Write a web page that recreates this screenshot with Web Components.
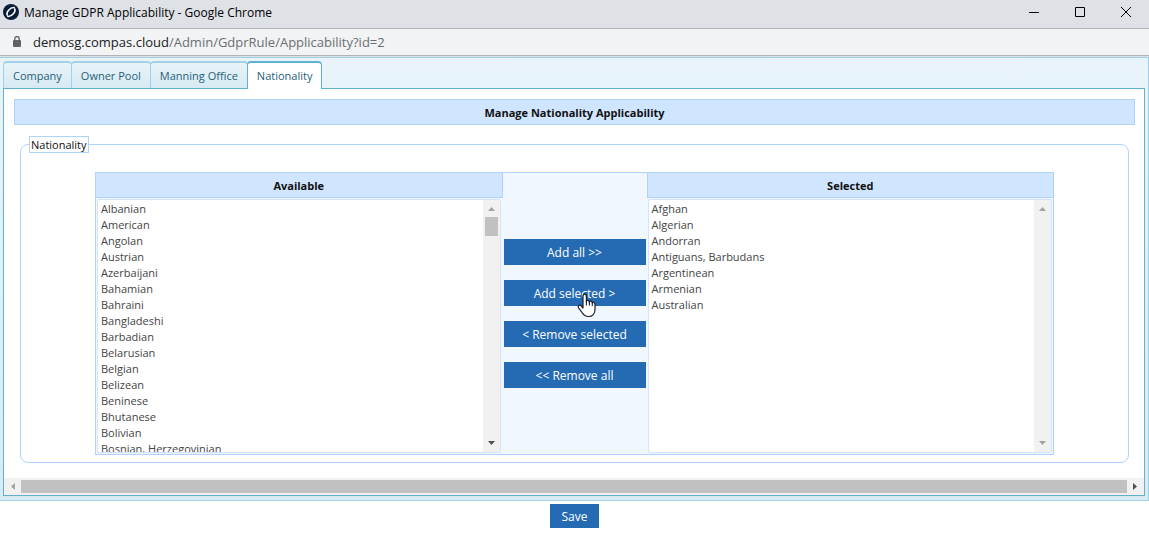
<!DOCTYPE html>
<html lang="en">
<head>
<meta charset="utf-8">
<title>Manage GDPR Applicability</title>
<style>
body {
  margin: 0;
  background-color: white;
  font-family: "Open Sans", "Noto Sans", sans-serif;
  font-size: 11px;
  line-height: 16px;
  color: #111;
}
</style>
</head>
<body>
<window-bar></window-bar>
<tab-panel>
  <section-title>Manage Nationality Applicability</section-title>
  <field-group legend="Nationality">
    <dual-list></dual-list>
  </field-group>
</tab-panel>
<form-footer>
  <action-button>Save</action-button>
</form-footer>

<script>
/**
 * Builds a template element from a string.
 */
function html (markup) {
  const template = document.createElement('template')
  template.innerHTML = markup
  return template
}

const windowTemplate = html(`
<style>
:host {
  display: block;
}

.title-bar {
  display: flex;
  align-items: center;
  height: 28px;
  padding-left: 3px;
  background-color: #dee1e6;
  border-bottom: 1px solid #b1b3b6;
  color: #000;
}

.logo {
  width: 16px;
  height: 16px;
  margin: 0 5px 4px 0;
}

h1 {
  flex: 1;
  margin: 0 0 2px;
  font-size: 12px;
  font-weight: normal;
}

.title-bar button {
  display: flex;
  align-items: center;
  justify-content: center;
  width: 46px;
  height: 24px;
  margin-bottom: 4px;
  padding: 0;
  border: 0;
  background: none;
}

.address-bar {
  display: flex;
  align-items: center;
  gap: 11px;
  height: 26px;
  padding-left: 12px;
  background-color: #f1f3f4;
  border-bottom: 1px solid #b1b3b6;
  box-shadow: 0 1px #dee1e3;
  margin-bottom: 1px;
  font-size: 13px;
  color: #6b6f73;
}

.address-bar b {
  font-weight: normal;
  color: #202124;
}
</style>
<div class="title-bar">
  <svg class="logo" viewBox="0 0 16 16" aria-hidden="true">
    <circle cx="8" cy="8" r="8" fill="#0b1c36"/>
    <g fill="none" stroke="#fff" stroke-width="1.500" stroke-linecap="round">
      <path d="M4.300 11.200C2.800 8.500 7 3.200 11.200 3.600"/>
      <path d="M11.700 4.800C13.200 7.500 9 12.800 4.800 12.400"/>
    </g>
  </svg>
  <h1>Manage GDPR Applicability - Google Chrome</h1>
  <button aria-label="Minimize"><svg width="10" height="10"><path d="M0 5.5H10" stroke="#000"/></svg></button>
  <button aria-label="Maximize"><svg width="10" height="10"><path d="M.5 .5H9.5V9.5H.5Z" fill="none" stroke="#000"/></svg></button>
  <button aria-label="Close"><svg width="10" height="10"><path d="M0 0L10 10M10 0L0 10" stroke="#000"/></svg></button>
</div>
<div class="address-bar">
  <svg width="10" height="12" viewBox="0 0 10 12" aria-hidden="true">
    <rect x="1" y="4" width="8" height="7" rx="1" fill="#5f6368"/>
    <path d="M2.8 4.5V2.8a2.2 2.2 0 0 1 4.4 0V4.5" fill="none" stroke="#5f6368" stroke-width="1.3"/>
  </svg>
  <span><b>demosg.compas.cloud</b>/Admin/GdprRule/Applicability?id=2</span>
</div>
`)
customElements.define('window-bar',
  /**
   * Title bar and address bar of the popup window.
   */
  class extends HTMLElement {
    constructor () {
      super()

      this.attachShadow({ mode: 'open' })
        .appendChild(windowTemplate.content.cloneNode(true))
    }
  })

const scrollTemplate = html(`
<style>
:host {
  display: flex;
  flex-direction: column;
  width: 17px;
  background-color: #f1f1f1;
}

:host([horizontal]) {
  flex-direction: row;
  width: auto;
  height: 17px;
}

.arrow {
  flex: none;
  width: 17px;
  height: 17px;
  fill: #a3a3a3;
}

.arrow.on {
  fill: #505050;
}

.track {
  flex: 1;
}

.thumb {
  height: 19px;
  margin: 0 2px;
  background-color: #c1c1c1;
}

:host([empty]) .thumb {
  display: none;
}

:host([horizontal]) .thumb {
  height: 13px;
  margin: 2px 0;
}

:host([horizontal]) .arrow {
  transform: rotate(-90deg);
}
</style>
<svg class="arrow" viewBox="0 0 17 17"><path d="M5 11L8.500 7L12 11Z"/></svg>
<div class="track"><div class="thumb"></div></div>
<svg class="arrow end" viewBox="0 0 17 17"><path d="M5 6L8.500 10L12 6Z"/></svg>
`)
customElements.define('scroll-bar',
  /**
   * A scroll bar, vertical unless it is told otherwise.
   */
  class extends HTMLElement {
    constructor () {
      super()

      this.attachShadow({ mode: 'open' })
        .appendChild(scrollTemplate.content.cloneNode(true))
      this.endArrow = this.shadowRoot.querySelector('.end')
    }

    connectedCallback () {
      this.setAttribute('aria-hidden', 'true')
      this.endArrow.classList.toggle('on', !this.hasAttribute('empty'))
    }
  })

const tabTemplate = html(`
<style>
:host {
  display: block;
  padding: 3px 3px 4px;
  background: linear-gradient(#e8f4f9, #d9eaf3);
  border: solid #a1d1e6;
  border-width: 1px 1px 1px 0;
}

nav {
  display: flex;
}

button {
  height: 27px;
  margin: 0 0 0 -1px;
  padding: 0 9px;
  border: 1px solid #a1d1e6;
  border-top-width: 2px;
  border-bottom: 0;
  border-radius: 4px 4px 0 0;
  background: linear-gradient(#e8f3f8, #d7eaf3);
  font: inherit;
  color: #266178;
}

button:first-child {
  margin-left: 0;
}

button[aria-selected="true"] {
  position: relative;
  height: 28px;
  margin-bottom: -1px;
  padding-bottom: 1px;
  border-color: #62afd0;
  background: white;
}

.panel {
  background-color: white;
  border: 1px solid #62afd0;
}

.content {
  padding: 10px 9px 15px 10px;
}
</style>
<nav role="tablist">
  <button role="tab" aria-selected="false">Company</button>
  <button role="tab" aria-selected="false">Owner Pool</button>
  <button role="tab" aria-selected="false">Manning Office</button>
  <button role="tab" aria-selected="true">Nationality</button>
</nav>
<div class="panel" role="tabpanel">
  <div class="content"><slot></slot></div>
  <scroll-bar horizontal></scroll-bar>
</div>
`)
customElements.define('tab-panel',
  /**
   * The tabs and the panel below them.
   */
  class extends HTMLElement {
    constructor () {
      super()

      this.attachShadow({ mode: 'open' })
        .appendChild(tabTemplate.content.cloneNode(true))
      this.tabs = this.shadowRoot.querySelectorAll('button')

      this.tabs.forEach((tab) => {
        tab.addEventListener('click', () => this.selectTab(tab))
      })
    }

    /**
     * Marks one tab as the selected one.
     */
    selectTab (selected) {
      this.tabs.forEach((tab) => {
        tab.setAttribute('aria-selected', String(tab === selected))
      })
    }
  })

const titleTemplate = html(`
<style>
:host {
  display: block;
}

h2 {
  margin: 0;
  padding: 5px 4px 3px;
  border: 1px solid #b0d2ff;
  background-color: #d0e5ff;
  font-size: 11px;
  font-weight: bold;
  text-align: center;
}
</style>
<h2><slot></slot></h2>
`)
customElements.define('section-title',
  class extends HTMLElement {
    constructor () {
      super()

      this.attachShadow({ mode: 'open' })
        .appendChild(titleTemplate.content.cloneNode(true))
    }
  })

const groupTemplate = html(`
<style>
:host {
  display: block;
  margin: 11px 6px 0;
}

fieldset {
  min-width: 0;
  margin: 0;
  padding: 19px 8px 7px;
  border: 1px solid #b0d2ff;
  border-radius: 8px;
}

legend {
  padding: 0 1px;
  border: 1px solid #b0d2ff;
  line-height: 15px;
}
</style>
<fieldset>
  <legend></legend>
  <slot></slot>
</fieldset>
`)
customElements.define('field-group',
  class extends HTMLElement {
    constructor () {
      super()

      this.attachShadow({ mode: 'open' })
        .appendChild(groupTemplate.content.cloneNode(true))
    }

    connectedCallback () {
      this.shadowRoot.querySelector('legend').textContent = this.getAttribute('legend')
    }
  })

const buttonTemplate = html(`
<style>
:host {
  display: block;
}

button {
  width: 100%;
  height: var(--button-height, 26px);
  padding: 2px 12px 0;
  border: 0;
  background-color: #256bb3;
  font: inherit;
  font-size: 12px;
  color: white;
}
</style>
<button><slot></slot></button>
`)
customElements.define('action-button',
  class extends HTMLElement {
    constructor () {
      super()

      this.attachShadow({ mode: 'open' })
        .appendChild(buttonTemplate.content.cloneNode(true))
    }
  })

const listTemplate = html(`
<style>
:host {
  display: block;
  min-width: 0;
}

label {
  display: block;
  padding: 5px 4px 3px;
  border: solid #b0d2ff;
  border-width: 0 0 1px;
  background-color: #d0e5ff;
  font-weight: bold;
  text-align: center;
}

:host([side="left"]) label {
  border-right-width: 1px;
}

:host([side="right"]) label {
  border-left-width: 1px;
}

.box {
  display: flex;
  height: 252px;
  margin: 1px;
  border: 1px solid #d5e3ff;
  border-radius: 2px;
  background-color: white;
}

:host([side="left"]) .box {
  margin-right: 2px;
}

select {
  flex: 1;
  min-width: 0;
  height: 100%;
  padding: 1px 0 0;
  border: 0;
  outline: 0;
  overflow: hidden;
  background: none;
  font: inherit;
  color: #444;
}

option {
  min-height: 16px;
  padding: 0 3px;
  line-height: 16px;
}
</style>
<label for="list"></label>
<div class="box">
  <select id="list" multiple></select>
  <scroll-bar></scroll-bar>
</div>
`)
customElements.define('name-list',
  /**
   * A list box below its heading.
   */
  class extends HTMLElement {
    constructor () {
      super()

      this.attachShadow({ mode: 'open' })
        .appendChild(listTemplate.content.cloneNode(true))
      this.select = this.shadowRoot.querySelector('select')
      this.scrollBar = this.shadowRoot.querySelector('scroll-bar')
    }

    connectedCallback () {
      this.shadowRoot.querySelector('label').textContent = this.getAttribute('heading')
    }

    /**
     * Fills the list with names.
     */
    set names (names) {
      this.select.replaceChildren(...names.map((name) => new Option(name)))
      this.scrollBar.toggleAttribute('empty', names.length < 16)
    }
  })

const dualTemplate = html(`
<style>
:host {
  display: grid;
  grid-template-columns: 1fr 144px 1fr;
  margin: 0 66px;
  border: 1px solid #b0d2ff;
  background-color: #f0f7ff;
}

.moves {
  display: flex;
  flex-direction: column;
  justify-content: center;
  gap: 15px;
  padding: 0 1px;
}

.hovered {
  position: relative;
}

.pointer {
  position: absolute;
  top: 13px;
  left: 50%;
  margin-left: 2px;
  pointer-events: none;
}
</style>
<name-list side="left" heading="Available"></name-list>
<div class="moves">
  <action-button>Add all &gt;&gt;</action-button>
  <div class="hovered">
    <action-button>Add selected &gt;</action-button>
    <svg class="pointer" width="20" height="25" viewBox="0 0 20 25" aria-hidden="true">
      <path d="M6 15V3.200C6 .4 9.400 .4 9.400 3.200V8.500C9.400 6.800 12.400 6.900 12.400 9.200C12.400 7.600 15.300 7.800 15.300 10C15.300 8.800 18 9 18 11.300V16.500C18 20.500 15.500 23.500 11.500 23.500C7.800 23.500 6.500 22 5 19.500L1.600 14.800C.4 12.600 2.800 11.500 4.200 12.900Z" fill="#fff" stroke="#1b1b2b" stroke-width="1.2" stroke-linejoin="round"/>
      <path d="M9.400 8V12.500M12.400 9V12.500M15.300 10V13" stroke="#1b1b2b" stroke-width="1.1" fill="none"/>
    </svg>
  </div>
  <action-button>&lt; Remove selected</action-button>
  <action-button>&lt;&lt; Remove all</action-button>
</div>
<name-list side="right" heading="Selected"></name-list>
`)
customElements.define('dual-list',
  /**
   * Two lists with the buttons that move names between them.
   */
  class extends HTMLElement {
    constructor () {
      super()

      this.attachShadow({ mode: 'open' })
        .appendChild(dualTemplate.content.cloneNode(true))
      const [available, selected] = this.shadowRoot.querySelectorAll('name-list')
      customElements.upgrade(available)
      customElements.upgrade(selected)
      available.names = ['Albanian', 'American', 'Angolan', 'Austrian', 'Azerbaijani',
        'Bahamian', 'Bahraini', 'Bangladeshi', 'Barbadian', 'Belarusian', 'Belgian',
        'Belizean', 'Beninese', 'Bhutanese', 'Bolivian', 'Bosnian, Herzegovinian']
      selected.names = ['Afghan', 'Algerian', 'Andorran', 'Antiguans, Barbudans',
        'Argentinean', 'Armenian', 'Australian']
      this.shadowRoot.querySelectorAll('name-list').forEach((list) => {
        list.scrollBar.connectedCallback()
      })
    }
  })

const footerTemplate = html(`
<style>
:host {
  display: flex;
  justify-content: center;
  padding: 3px 0;
  --button-height: 24px;
}
</style>
<slot></slot>
`)
customElements.define('form-footer',
  class extends HTMLElement {
    constructor () {
      super()

      this.attachShadow({ mode: 'open' })
        .appendChild(footerTemplate.content.cloneNode(true))
    }
  })
</script>
</body>
</html>
